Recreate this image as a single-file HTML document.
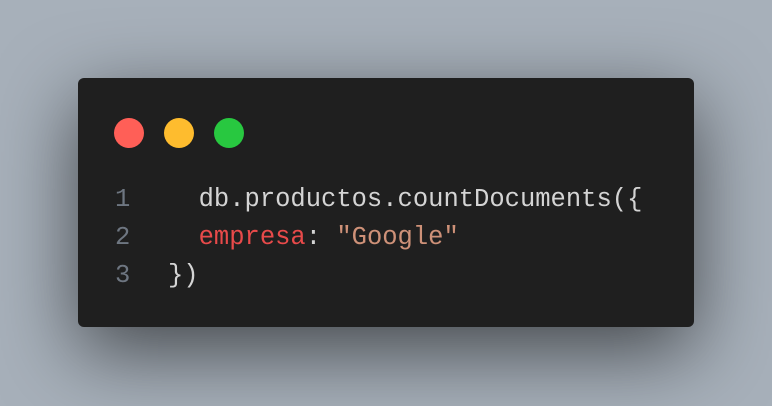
<!DOCTYPE html>
<html><head><style>
html,body{margin:0;padding:0;width:772px;height:406px;overflow:hidden;background:#a7b0ba;}
.card{position:absolute;left:78px;top:78px;width:616px;height:249px;background:#1f1f1f;border-radius:6px;box-shadow:0 24px 80px rgba(0,0,0,0.6);}
.dot{position:absolute;top:118px;width:30px;height:30px;border-radius:50%;}
.code{position:absolute;left:0;top:0;font-family:"Liberation Mono",monospace;font-size:25.5px;line-height:38px;color:#d4d4d4;white-space:pre;}
.ln{position:absolute;left:115px;color:#6e7681;}
.t{position:absolute;left:168px;}
</style></head><body>
<div class="card"></div>
<div class="dot" style="left:114px;background:#ff5f57"></div>
<div class="dot" style="left:164px;background:#febc2e"></div>
<div class="dot" style="left:214px;background:#28c840"></div>
<div class="code">
<div class="ln" style="top:181px">1</div><div class="t" style="top:181px">  db.productos.countDocuments({</div>
<div class="ln" style="top:219px">2</div><div class="t" style="top:219px">  <span style="color:#e84a4a">empresa</span>: <span style="color:#ce9178">"Google"</span></div>
<div class="ln" style="top:257px">3</div><div class="t" style="top:257px">})</div>
</div>
</body></html>
